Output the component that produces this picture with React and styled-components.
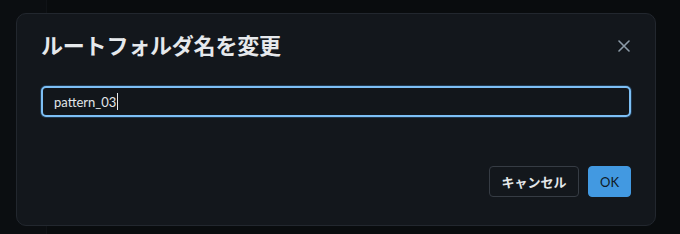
import React from "react";
import styled, { createGlobalStyle } from "styled-components";

const Global = createGlobalStyle`
  html, body { margin: 0; padding: 0; background: #0a0d10; }
  body { font-family: "Noto Sans", "Noto Sans CJK JP", sans-serif; }
  * { box-sizing: border-box; }
`;

const Page = styled.div`
  position: relative;
  width: 680px;
  height: 234px;
  display: flex;
  background: #090c0e;
  overflow: hidden;
`;

const Sidebar = styled.div`
  width: 47px;
  background: #0b0e11;
  border-right: 1px solid #101317;
`;

const Overlay = styled.div`
  position: absolute;
  inset: 0;
  padding: 13px 0 0 16px;
`;

const Dialog = styled.div`
  width: 640px;
  height: 213px;
  background: #13171c;
  border: 1px solid #22272e;
  border-radius: 10px;
  padding: 16px 24px 28px 24px;
  display: flex;
  flex-direction: column;
`;

const Header = styled.div`
  height: 28px;
  display: flex;
  align-items: center;
  justify-content: space-between;
`;

const Title = styled.h2`
  margin: 0;
  font-family: "Noto Sans CJK JP", sans-serif;
  font-size: 22px;
  font-weight: 700;
  color: #e6e9ec;
  line-height: 28px;
  letter-spacing: -0.2px;
`;

const CloseButton = styled.button`
  width: 24px;
  height: 24px;
  margin-right: -5px;
  margin-top: 4px;
  border: none;
  background: transparent;
  padding: 0;
  display: flex;
  align-items: center;
  justify-content: center;
  color: #8c9ba8;
`;

const Field = styled.div`
  margin-top: 28px;
  height: 31px;
  border: 2px solid #7dbff5;
  border-radius: 5px;
  box-shadow: 0 0 0 1px rgba(66, 153, 225, 0.25);
  background: #12161b;
  display: flex;
  align-items: center;
  padding-left: 11px;
  font-family: Lato, "Noto Sans", sans-serif;
  font-size: 13px;
  color: #e2e6ea;
`;

const Caret = styled.span`
  display: inline-block;
  width: 1px;
  height: 17px;
  background: #e8ebee;
  margin-left: 1px;
`;

const Footer = styled.div`
  margin-top: auto;
  display: flex;
  justify-content: flex-end;
  gap: 9px;
`;

const Button = styled.button`
  height: 31px;
  width: ${(p) => (p.$primary ? "43px" : "90px")};
  padding: 0;
  border-radius: 4px;
  font-family: ${(p) => (p.$primary ? "Lato, " : "")}"Noto Sans CJK JP", sans-serif;
  font-size: 13px;
  font-weight: ${(p) => (p.$primary ? 400 : 700)};
  border: 1px solid ${(p) => (p.$primary ? "#4299e1" : "#363c44")};
  background: ${(p) => (p.$primary ? "#4299e1" : "#13171c")};
  color: ${(p) => (p.$primary ? "#0f1a26" : "#e4e7ea")};
`;

export default function App() {
  return (
    <>
      <Global />
      <Page>
        <Sidebar />
        <Overlay>
          <Dialog>
            <Header>
              <Title>ルートフォルダ名を変更</Title>
              <CloseButton aria-label="close">
                <svg width="12" height="12" viewBox="0 0 12 12">
                  <path d="M1 1 L11 11 M11 1 L1 11" stroke="currentColor" strokeWidth="1.6" strokeLinecap="round" />
                </svg>
              </CloseButton>
            </Header>
            <Field>
              pattern_03
              <Caret />
            </Field>
            <Footer>
              <Button>キャンセル</Button>
              <Button $primary>OK</Button>
            </Footer>
          </Dialog>
        </Overlay>
      </Page>
    </>
  );
}
